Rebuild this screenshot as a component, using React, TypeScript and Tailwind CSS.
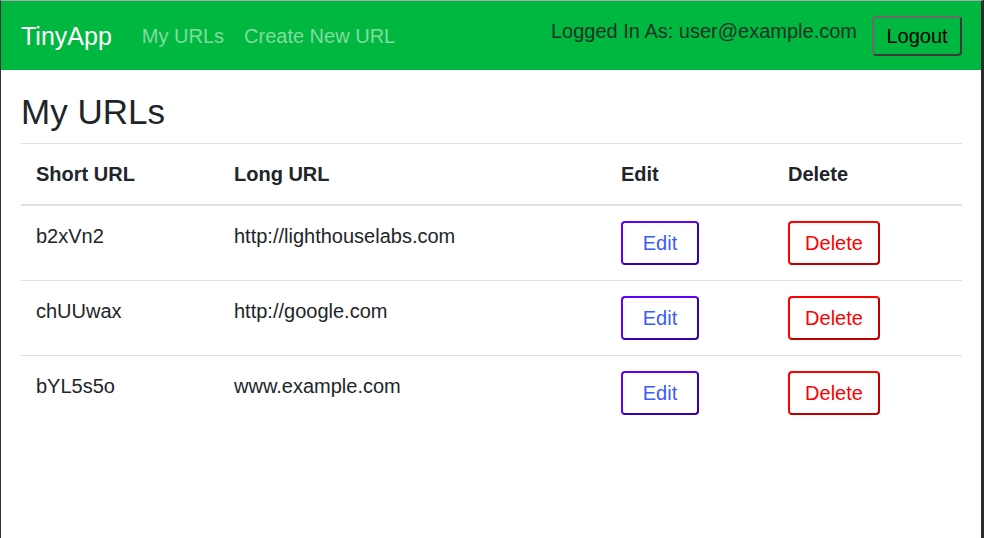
const urls = [
  { short: "b2xVn2", long: "http://lighthouselabs.com" },
  { short: "chUUwax", long: "http://google.com" },
  { short: "bYL5s5o", long: "www.example.com" },
];

function Navbar() {
  return (
    <nav className="flex h-[69px] items-center bg-[#00b83f] pl-[20px] pr-[19px]">
      <span className="mr-[20px] text-[25px] leading-[1.2] text-white">TinyApp</span>
      <a className="px-[10px] pt-[1px] text-[20px] leading-[1.5] text-[#80dc9f]">My URLs</a>
      <a className="px-[10px] pt-[1px] text-[20px] leading-[1.5] text-[#80dc9f]">Create New URL</a>
      <div className="ml-auto flex items-center gap-[15px]">
        <span className="-mt-[10px] text-[20px] leading-[1.5] text-[#1c3326]">
          Logged In As: user@example.com
        </span>
        <button className="flex h-[40px] w-[90px] items-center justify-center rounded-[4px] border-2 border-[#6b6b6b] border-b-[#3a3a3a] border-r-[#3a3a3a] text-[20px] leading-none text-black">
          Logout
        </button>
      </div>
    </nav>
  );
}

export default function App() {
  return (
    <div
      className="h-[538px] w-[984px] overflow-hidden border-l border-r-[3px] border-t border-l-[#333333] border-r-[#2b2b2b] border-t-[#a8a8a8] bg-white text-[#212529]"
      style={{ fontFamily: '"Liberation Sans", Arial, sans-serif' }}
    >
      <Navbar />
      <main className="pl-[20px] pr-[19px] pt-[21px]">
        <h1 className="mb-[10px] text-[35px] font-normal leading-[1.2]">My URLs</h1>
        <table className="w-full border-collapse text-[20px] leading-[1.5]">
          <colgroup>
            <col className="w-[198px]" />
            <col className="w-[387px]" />
            <col className="w-[167px]" />
            <col />
          </colgroup>
          <thead>
            <tr className="border-b-2 border-t border-[#dee2e6]">
              <th className="p-[15px] text-left font-bold">Short URL</th>
              <th className="p-[15px] text-left font-bold">Long URL</th>
              <th className="p-[15px] text-left font-bold">Edit</th>
              <th className="p-[15px] text-left font-bold">Delete</th>
            </tr>
          </thead>
          <tbody>
            {urls.map((u, i) => (
              <tr key={u.short} className={i > 0 ? "border-t border-[#dee2e6]" : ""}>
                <td className="p-[15px] align-top">{u.short}</td>
                <td className="p-[15px] align-top">{u.long}</td>
                <td className="p-[15px] align-top">
                  <button className="flex h-[44px] w-[78px] items-center justify-center rounded-[4px] border-2 border-[#6000ff] border-b-[#3a00b0] border-r-[#3a00b0] text-[20px] leading-none text-[#3b5bfd]">
                    Edit
                  </button>
                </td>
                <td className="p-[15px] align-top">
                  <button className="flex h-[44px] w-[92px] items-center justify-center rounded-[4px] border-2 border-[#ff0000] border-b-[#c00000] border-r-[#c00000] text-[20px] leading-none text-[#ff0000]">
                    Delete
                  </button>
                </td>
              </tr>
            ))}
          </tbody>
        </table>
      </main>
    </div>
  );
}
